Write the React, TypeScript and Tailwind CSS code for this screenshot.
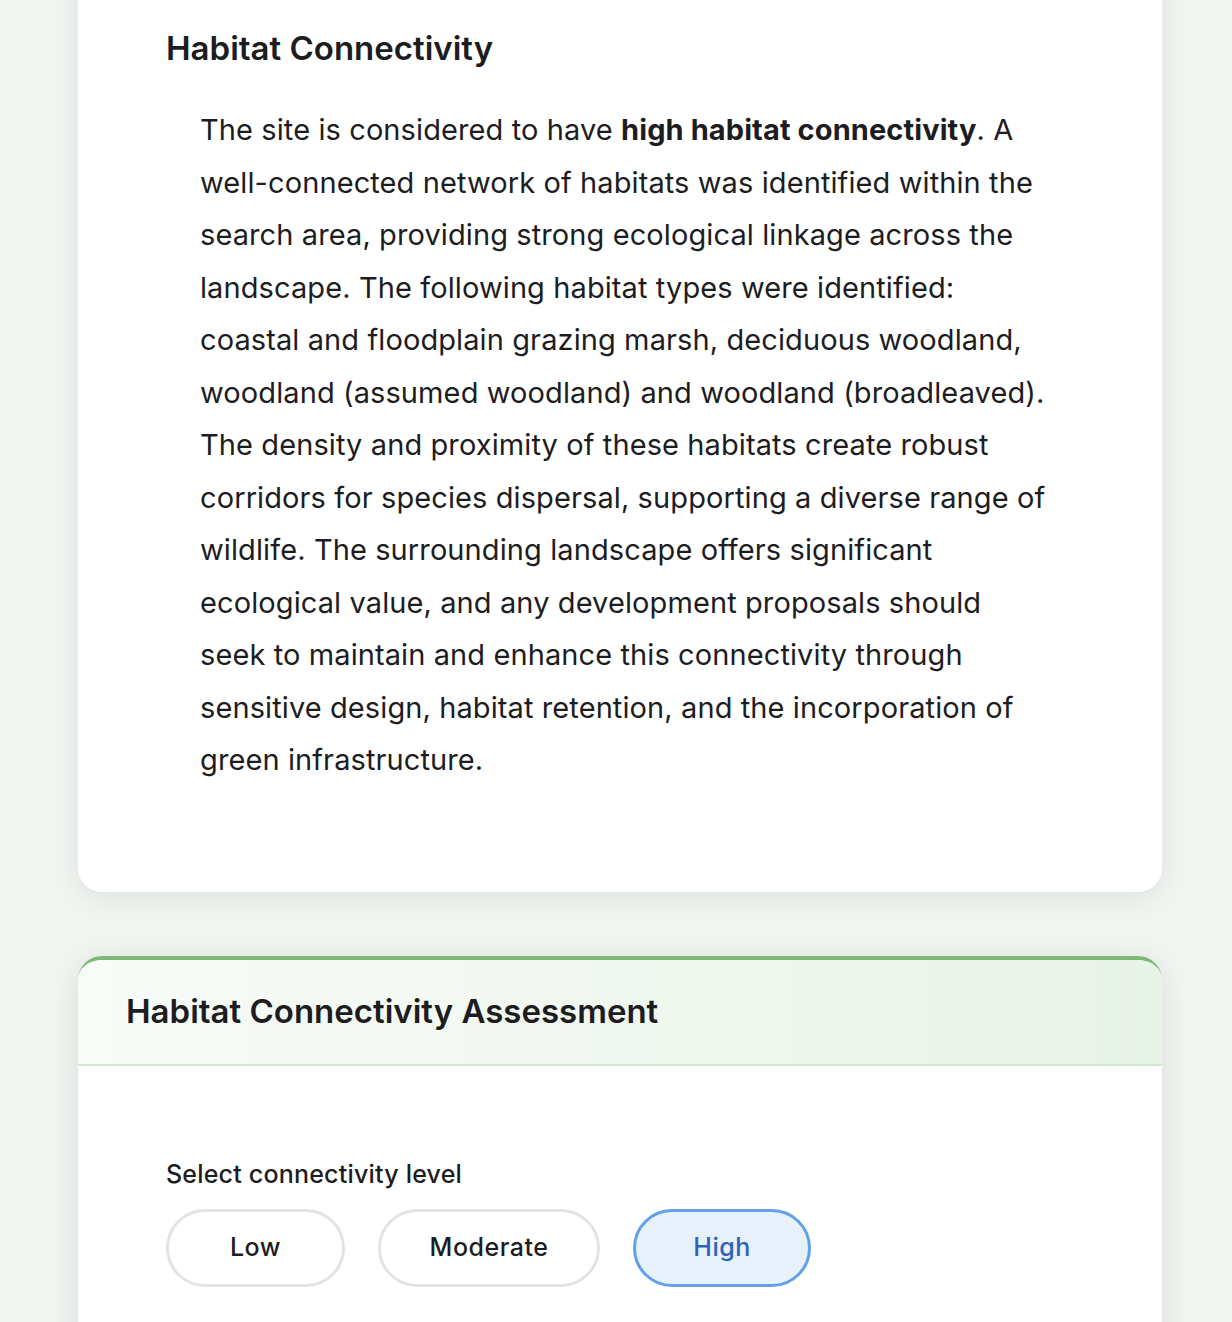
import React, { useState } from 'react';

const levels = ['Low', 'Moderate', 'High'] as const;
type Level = (typeof levels)[number];

const App: React.FC = () => {
  const [level, setLevel] = useState<Level>('High');

  return (
    <div
      className="min-h-screen bg-[#f0f5f1] overflow-hidden"
      style={{ fontFamily: 'Inter, "Noto Sans", sans-serif' }}
    >
      <div className="pl-[78px] pr-[70px]">
        {/* Summary card */}
        <div className="-mt-10 bg-white rounded-[24px] shadow-[0_6px_30px_rgba(0,0,0,0.08)] pt-[70px] pb-[105px] px-[88px]">
          <h2 className="text-[33px] leading-9 font-semibold text-[#1d1d1f]">
            Habitat Connectivity
          </h2>
          <p className="mt-[38px] pl-[34px] text-[29px] leading-[52.5px] text-[#1d1d1f] tracking-[0.1px]">
            The site is considered to have <strong className="font-bold">high habitat connectivity</strong>. A
            <br />
            well-connected network of habitats was identified within the
            <br />
            search area, providing strong ecological linkage across the
            <br />
            landscape. The following habitat types were identified:
            <br />
            coastal and floodplain grazing marsh, deciduous woodland,
            <br />
            woodland (assumed woodland) and woodland (broadleaved).
            <br />
            The density and proximity of these habitats create robust
            <br />
            corridors for species dispersal, supporting a diverse range of
            <br />
            wildlife. The surrounding landscape offers significant
            <br />
            ecological value, and any development proposals should
            <br />
            seek to maintain and enhance this connectivity through
            <br />
            sensitive design, habitat retention, and the incorporation of
            <br />
            green infrastructure.
          </p>
        </div>

        {/* Assessment card */}
        <div className="mt-[64px] bg-white rounded-t-[24px] border-t-4 border-[#7cb974] shadow-[0_6px_30px_rgba(0,0,0,0.1)] overflow-hidden">
          <div className="h-[106px] flex items-center px-12 bg-gradient-to-r from-[#f8fbf8] to-[#e8f3e7] border-b-2 border-[#d4e8d1]">
            <h3 className="text-[33px] font-semibold text-[#1d1d1f]">
              Habitat Connectivity Assessment
            </h3>
          </div>
          <div className="px-[88px] pt-[92px] pb-[60px]">
            <div className="text-[25px] tracking-[0.2px] font-medium text-[#1d1d1f] leading-8">
              Select connectivity level
            </div>
            <div className="mt-[19px] flex gap-[33px]">
              {levels.map((l) => {
                const active = l === level;
                return (
                  <button
                    key={l}
                    onClick={() => setLevel(l)}
                    className={
                      active
                        ? 'h-[78px] w-[178px] rounded-full border-[3px] border-[#62a0ea] bg-[#e6f1fc] text-[#2f62b7] text-[25px] tracking-[0.5px] font-medium'
                        : l === 'Moderate'
                        ? 'h-[78px] w-[222px] rounded-full border-[3px] border-[#e3e3e3] bg-white text-[#1d1d1f] text-[25px] tracking-[0.5px] font-medium'
                        : 'h-[78px] w-[179px] rounded-full border-[3px] border-[#e3e3e3] bg-white text-[#1d1d1f] text-[25px] tracking-[0.5px] font-medium'
                    }
                  >
                    {l}
                  </button>
                );
              })}
            </div>
          </div>
        </div>
      </div>
    </div>
  );
};

export default App;
